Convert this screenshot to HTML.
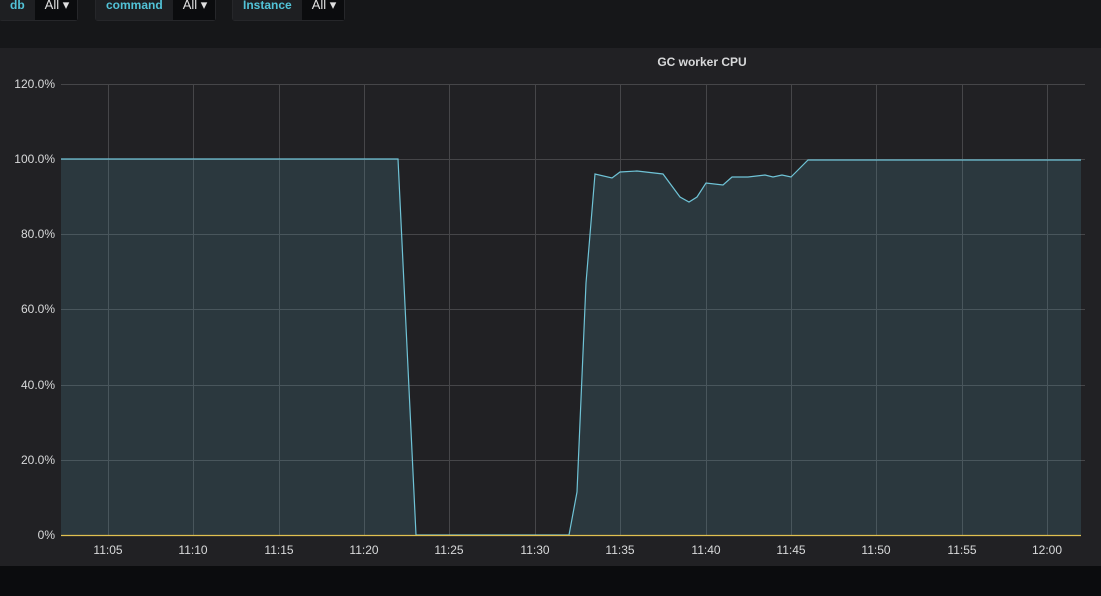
<!DOCTYPE html>
<html><head><meta charset="utf-8"><style>
html,body{margin:0;padding:0;width:1101px;height:596px;overflow:hidden;background:#161719;font-family:"Liberation Sans",sans-serif;}
.top{position:absolute;left:0;top:0;width:1101px;height:48px;background:#161719;}
.f{position:absolute;top:-7px;height:26px;border-radius:3px;display:flex;border:1px solid #26272a;}
.f .l{background:#1e1f22;color:#52c3d8;font-weight:bold;font-size:12px;line-height:22px;padding:0 10px;}
.f .v{background:#0b0c0e;color:#e0e0e0;font-size:13px;line-height:22px;padding:0 8px 0 10px;}
.panel{position:absolute;left:0;top:48px;width:1101px;height:518px;background:#212124;}
.bottom{position:absolute;left:0;top:566px;width:1101px;height:30px;background:#0b0c0e;}
svg text{font-family:"Liberation Sans",sans-serif;}
</style></head><body>
<div class="top">
<div class="f" style="left:-1px"><div class="l">db</div><div class="v">All ▾</div></div>
<div class="f" style="left:95px"><div class="l">command</div><div class="v">All ▾</div></div>
<div class="f" style="left:232px"><div class="l">Instance</div><div class="v">All ▾</div></div>
</div>
<div class="panel"></div>
<div class="bottom"></div>
<svg width="1101" height="596" style="position:absolute;left:0;top:0">
<text x="702" y="66" fill="#d8d9da" font-size="12" font-weight="bold" text-anchor="middle">GC worker CPU</text>
<g stroke="#464649" stroke-width="1">
<line x1="61" y1="84.5" x2="1085" y2="84.5"/>
<line x1="61" y1="159.5" x2="1085" y2="159.5"/>
<line x1="61" y1="234.5" x2="1085" y2="234.5"/>
<line x1="61" y1="309.5" x2="1085" y2="309.5"/>
<line x1="61" y1="385.5" x2="1085" y2="385.5"/>
<line x1="61" y1="460.5" x2="1085" y2="460.5"/>
<line x1="108.5" y1="84" x2="108.5" y2="535"/><line x1="193.5" y1="84" x2="193.5" y2="535"/>
<line x1="279.5" y1="84" x2="279.5" y2="535"/><line x1="364.5" y1="84" x2="364.5" y2="535"/>
<line x1="449.5" y1="84" x2="449.5" y2="535"/><line x1="535.5" y1="84" x2="535.5" y2="535"/>
<line x1="620.5" y1="84" x2="620.5" y2="535"/><line x1="706.5" y1="84" x2="706.5" y2="535"/>
<line x1="791.5" y1="84" x2="791.5" y2="535"/><line x1="876.5" y1="84" x2="876.5" y2="535"/>
<line x1="962.5" y1="84" x2="962.5" y2="535"/><line x1="1047.5" y1="84" x2="1047.5" y2="535"/>
</g>
<path d="M61,159 L398,159 L416,535 L569,535 L577,492 L586,283 L595,174 L612,178 L620,172 L637,171 L663,174 L680,197 L689,202 L697,197 L706,183 L723,185 L732,177 L748,177 L765,175 L773,177 L782,175 L791,177 L808,160 L1081,160 L1081,535 L61,535 Z" fill="#5794a8" fill-opacity="0.2" stroke="none"/>
<path d="M61,159 L398,159 L416,535 L569,535 L577,492 L586,283 L595,174 L612,178 L620,172 L637,171 L663,174 L680,197 L689,202 L697,197 L706,183 L723,185 L732,177 L748,177 L765,175 L773,177 L782,175 L791,177 L808,160 L1081,160" fill="none" stroke="#6fc3d6" stroke-width="1.2"/>
<line x1="61" y1="535.5" x2="1081" y2="535.5" stroke="#e0c050" stroke-width="1.2"/>
<g fill="#d8d9da" font-size="12" text-anchor="end">
<text x="55" y="88">120.0%</text><text x="55" y="163">100.0%</text><text x="55" y="238">80.0%</text>
<text x="55" y="313">60.0%</text><text x="55" y="389">40.0%</text><text x="55" y="464">20.0%</text><text x="55" y="539">0%</text>
</g>
<g fill="#d8d9da" font-size="12" text-anchor="middle">
<text x="108" y="554">11:05</text><text x="193" y="554">11:10</text><text x="279" y="554">11:15</text>
<text x="364" y="554">11:20</text><text x="449" y="554">11:25</text><text x="535" y="554">11:30</text>
<text x="620" y="554">11:35</text><text x="706" y="554">11:40</text><text x="791" y="554">11:45</text>
<text x="876" y="554">11:50</text><text x="962" y="554">11:55</text><text x="1047" y="554">12:00</text>
</g>
</svg>
</body></html>
